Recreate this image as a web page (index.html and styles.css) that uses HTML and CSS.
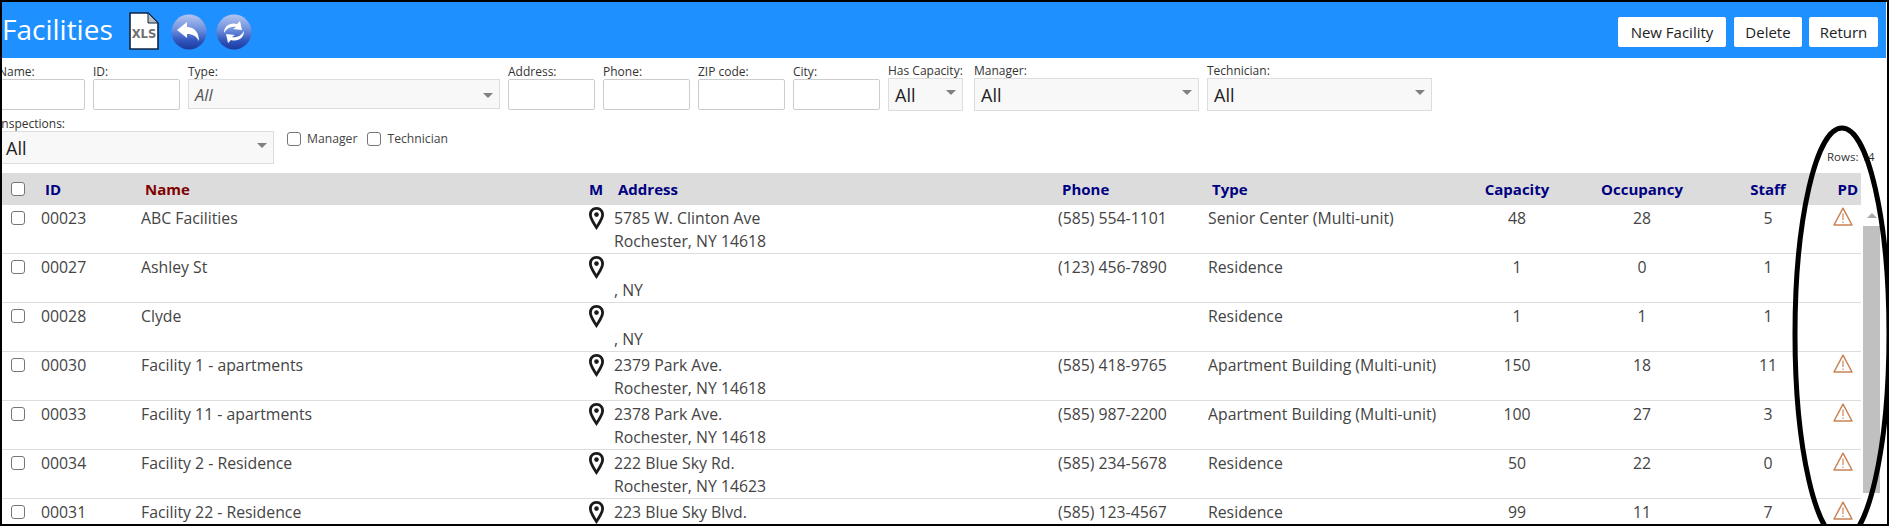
FILE: index.html
```html
<!DOCTYPE html>
<html lang="en">
<head>
<meta charset="utf-8">
<title>Facilities</title>
<link rel="stylesheet" href="styles.css">
</head>
<body>
<div class="frame">
  <svg class="defs" width="0" height="0">
    <defs>
      <linearGradient id="gl" x1="0" y1="0" x2="0" y2="1">
        <stop offset="0" stop-color="#b4c6f0"/><stop offset=".45" stop-color="#6a8cdc"/><stop offset=".75" stop-color="#2f55bd"/><stop offset="1" stop-color="#1c3a9c"/>
      </linearGradient>
      <path id="pin" fill="#1a1a1a" fill-rule="evenodd" d="M7.500 0C3.200 0 0 3.300 0 7.600 0 12 4.500 18.500 7.500 23 10.500 18.500 15 12 15 7.600 15 3.300 11.800 0 7.500 0ZM7.500 2.800C10.200 2.800 12.200 4.800 12.200 7.600 12.200 10.500 9.500 14.800 7.500 18 5.500 14.800 2.800 10.500 2.800 7.600 2.800 4.800 4.800 2.800 7.500 2.800Z"/>
      <g id="warn">
        <path d="M10 1.200 19 18H1Z" fill="none" stroke="#c98355" stroke-width="1.500" stroke-linejoin="round"/>
        <path d="M10 6.500V13M10 14.500V16" stroke="#d9a484" stroke-width="1.600"/>
      </g>
    </defs>
  </svg>
  <header class="topbar">
    <h1 class="title">Facilities</h1>
    <svg class="xls" width="30" height="38" viewBox="0 0 30 38">
      <path d="M1 1H19L29 11V37H1Z" fill="#fff" stroke="#10243f" stroke-width="1.600"/>
      <path d="M19 1V11H29Z" fill="#b9bec4" stroke="#10243f" stroke-width="1"/>
      <text class="xls-text" x="15" y="26" text-anchor="middle">XLS</text>
    </svg>
    <svg class="round first" width="36" height="36" viewBox="0 0 36 36">
      <circle cx="18" cy="18" r="17.500" fill="url(#gl)"/>
      <path d="M6 16 16 8V13C23 13 28 18 28 27 25 22 22 20 16 20V24Z" fill="#fff"/>
    </svg>
    <svg class="round" width="36" height="36" viewBox="0 0 36 36">
      <circle cx="18" cy="18" r="17.500" fill="url(#gl)"/>
      <path d="M8 19C8 12 14 8 21 10L24 7 26 16 17 15 20 13C15 12 11 14 8 19Z" fill="#fff"/>
      <path d="M28 17C28 24 22 28 15 26L12 29 10 20 19 21 16 23C21 24 25 22 28 17Z" fill="#fff"/>
    </svg>
    <div class="actions">
      <button class="btn b-new" type="button">New Facility</button>
      <button class="btn b-del" type="button">Delete</button>
      <button class="btn b-ret" type="button">Return</button>
    </div>
  </header>

  <section class="filters">
    <div class="filter-row">
      <label class="field w-text"><span class="lbl">Name:</span><input class="inp" type="text"></label>
      <label class="field w-text"><span class="lbl">ID:</span><input class="inp" type="text"></label>
      <div class="field w-type"><span class="lbl">Type:</span><div class="sel sel-thin"><span class="italic">All</span></div></div>
      <label class="field w-text"><span class="lbl">Address:</span><input class="inp" type="text"></label>
      <label class="field w-text"><span class="lbl">Phone:</span><input class="inp" type="text"></label>
      <label class="field w-text"><span class="lbl">ZIP code:</span><input class="inp" type="text"></label>
      <label class="field w-text"><span class="lbl">City:</span><input class="inp" type="text"></label>
      <div class="field up w-cap"><span class="lbl">Has Capacity:</span><div class="sel"><span>All</span></div></div>
      <div class="field up w-person far"><span class="lbl">Manager:</span><div class="sel"><span>All</span></div></div>
      <div class="field up w-person"><span class="lbl">Technician:</span><div class="sel"><span>All</span></div></div>
    </div>
    <div class="filter-row second">
      <div class="field w-insp"><span class="lbl lbl-15">Inspections:</span><div class="sel"><span>All</span></div></div>
      <div class="checks">
        <label class="chk"><input type="checkbox" class="box">Manager</label>
        <label class="chk"><input type="checkbox" class="box">Technician</label>
      </div>
      <div class="rows-count">Rows: 14</div>
    </div>
  </section>

  <div class="grid-area">
    <table class="grid">
      <colgroup>
        <col class="c-chk"><col class="c-id"><col class="c-name"><col class="c-m"><col class="c-addr"><col class="c-phone"><col class="c-type"><col class="c-cap"><col class="c-occ"><col class="c-staff"><col class="c-pd">
      </colgroup>
      <thead>
        <tr>
          <th class="ck"><input type="checkbox" class="box"></th>
          <th class="hl">ID</th>
          <th class="hl sorted">Name</th>
          <th class="hm">M</th>
          <th class="hl">Address</th>
          <th class="hl">Phone</th>
          <th class="hl">Type</th>
          <th class="num">Capacity</th>
          <th class="num">Occupancy</th>
          <th class="num">Staff</th>
          <th class="hpd">PD</th>
        </tr>
      </thead>
      <tbody>
        <tr><td class="ck"><input type="checkbox" class="box"></td><td>00023</td><td>ABC Facilities</td><td class="pin"><svg class="pin-i" width="15" height="23" viewBox="0 0 15 23"><use href="#pin"/><circle cx="7.500" cy="7.600" r="2.300" fill="#1a1a1a"/></svg></td><td>5785 W. Clinton Ave<br>Rochester, NY 14618</td><td>(585) 554-1101</td><td>Senior Center (Multi-unit)</td><td class="num">48</td><td class="num">28</td><td class="num">5</td><td class="pd"><svg class="warn" width="20" height="19" viewBox="0 0 20 19"><use href="#warn"/></svg></td></tr>
        <tr><td class="ck"><input type="checkbox" class="box"></td><td>00027</td><td>Ashley St</td><td class="pin"><svg class="pin-i" width="15" height="23" viewBox="0 0 15 23"><use href="#pin"/><circle cx="7.500" cy="7.600" r="2.300" fill="#1a1a1a"/></svg></td><td><br>, NY</td><td>(123) 456-7890</td><td>Residence</td><td class="num">1</td><td class="num">0</td><td class="num">1</td><td class="pd"></td></tr>
        <tr><td class="ck"><input type="checkbox" class="box"></td><td>00028</td><td>Clyde</td><td class="pin"><svg class="pin-i" width="15" height="23" viewBox="0 0 15 23"><use href="#pin"/><circle cx="7.500" cy="7.600" r="2.300" fill="#1a1a1a"/></svg></td><td><br>, NY</td><td></td><td>Residence</td><td class="num">1</td><td class="num">1</td><td class="num">1</td><td class="pd"></td></tr>
        <tr><td class="ck"><input type="checkbox" class="box"></td><td>00030</td><td>Facility 1 - apartments</td><td class="pin"><svg class="pin-i" width="15" height="23" viewBox="0 0 15 23"><use href="#pin"/><circle cx="7.500" cy="7.600" r="2.300" fill="#1a1a1a"/></svg></td><td>2379 Park Ave.<br>Rochester, NY 14618</td><td>(585) 418-9765</td><td>Apartment Building (Multi-unit)</td><td class="num">150</td><td class="num">18</td><td class="num">11</td><td class="pd"><svg class="warn" width="20" height="19" viewBox="0 0 20 19"><use href="#warn"/></svg></td></tr>
        <tr><td class="ck"><input type="checkbox" class="box"></td><td>00033</td><td>Facility 11 - apartments</td><td class="pin"><svg class="pin-i" width="15" height="23" viewBox="0 0 15 23"><use href="#pin"/><circle cx="7.500" cy="7.600" r="2.300" fill="#1a1a1a"/></svg></td><td>2378 Park Ave.<br>Rochester, NY 14618</td><td>(585) 987-2200</td><td>Apartment Building (Multi-unit)</td><td class="num">100</td><td class="num">27</td><td class="num">3</td><td class="pd"><svg class="warn" width="20" height="19" viewBox="0 0 20 19"><use href="#warn"/></svg></td></tr>
        <tr><td class="ck"><input type="checkbox" class="box"></td><td>00034</td><td>Facility 2 - Residence</td><td class="pin"><svg class="pin-i" width="15" height="23" viewBox="0 0 15 23"><use href="#pin"/><circle cx="7.500" cy="7.600" r="2.300" fill="#1a1a1a"/></svg></td><td>222 Blue Sky Rd.<br>Rochester, NY 14623</td><td>(585) 234-5678</td><td>Residence</td><td class="num">50</td><td class="num">22</td><td class="num">0</td><td class="pd"><svg class="warn" width="20" height="19" viewBox="0 0 20 19"><use href="#warn"/></svg></td></tr>
        <tr><td class="ck"><input type="checkbox" class="box"></td><td>00031</td><td>Facility 22 - Residence</td><td class="pin"><svg class="pin-i" width="15" height="23" viewBox="0 0 15 23"><use href="#pin"/><circle cx="7.500" cy="7.600" r="2.300" fill="#1a1a1a"/></svg></td><td>223 Blue Sky Blvd.<br>Rochester, NY 14618</td><td>(585) 123-4567</td><td>Residence</td><td class="num">99</td><td class="num">11</td><td class="num">7</td><td class="pd"><svg class="warn" width="20" height="19" viewBox="0 0 20 19"><use href="#warn"/></svg></td></tr>
      </tbody>
    </table>
    <div class="scrollbar">
      <div class="sb-up"></div>
      <div class="sb-thumb"></div>
    </div>
  </div>

  <svg class="circle" width="1891" height="526" viewBox="0 0 1891 526"><ellipse cx="1842" cy="334" rx="47" ry="206" fill="none" stroke="#000" stroke-width="5"/></svg>
</div>
</body>
</html>
```
FILE: styles.css
```css
* { box-sizing: border-box; }
html, body { margin: 0; padding: 0; background: #fff; }
body { font-family: "Open Sans", "Noto Sans", sans-serif; color: #333; overflow: hidden; }

.frame {
  position: relative;
  width: 1889px;
  height: 526px;
  border: 2px solid #000;
  overflow: hidden;
  background: #fff;
}
.defs { position: absolute; }

.topbar {
  display: flex;
  align-items: center;
  height: 56px;
  width: 1884px;
  background: #1e90ff;
  padding-right: 8px;
}
.title {
  margin: 0 0 2px 0;
  font-size: 28px;
  font-weight: 400;
  color: #fff;
  line-height: 36px;
  width: 127px;
}
.xls { margin-top: 2px; }
.xls-text { font: 700 11.500px "DejaVu Sans", sans-serif; fill: #707070; }
.round { margin-left: 9px; margin-top: 4px; }
.round.first { margin-left: 12px; }
.actions { margin-left: auto; display: flex; gap: 8px; margin-top: 3px; }
.btn {
  height: 30px;
  padding: 0;
  border: 0;
  border-radius: 2px;
  background: #fff;
  color: #222;
  font: 400 15px/30px "Open Sans", sans-serif;
}
.b-new { width: 108px; }
.b-del { width: 68px; }
.b-ret { width: 69px; margin-left: -1px; }

.filters { padding-top: 7px; }
.filter-row { display: flex; align-items: flex-start; gap: 8px; margin-left: -4px; }
.filter-row.second { margin-top: 5px; margin-bottom: 9px; gap: 0; }
.field { display: flex; flex-direction: column; flex: none; }
.field.up { margin-top: -1px; }
.field.far { margin-left: 3px; }
.lbl { font-size: 12px; line-height: 14px; color: #333; white-space: nowrap; }
.lbl-15 { line-height: 15px; }
.w-text { width: 87px; }
.w-type { width: 312px; }
.w-cap { width: 75px; }
.w-person { width: 225px; }
.w-insp { width: 276px; }
.inp {
  height: 31px;
  width: 100%;
  border: 1px solid #ccc;
  border-radius: 2px;
  background: #fff;
}
.sel {
  position: relative;
  height: 33px;
  padding: 1px 0 0 6px;
  border: 1px solid #ddd;
  background: #f8f8f8;
  font-size: 18px;
  line-height: 30px;
  color: #222;
}
.w-insp .sel { padding-left: 7px; }
.sel-thin { height: 30px; padding: 0 0 0 6px; line-height: 29px; }
.sel::after {
  content: "";
  position: absolute;
  right: 6px;
  top: 11px;
  border: 5px solid transparent;
  border-top: 5px solid #808080;
  border-bottom: 0;
}
.sel-thin::after { top: 13px; }
.italic { font-style: italic; font-size: 16.500px; color: #555; }

.checks { display: flex; gap: 10px; margin-left: 13px; padding-top: 15px; }
.chk { display: flex; align-items: center; gap: 6px; font-size: 12.200px; line-height: 15px; color: #444; }
.box {
  appearance: none;
  width: 14px;
  height: 14px;
  margin: 0;
  border: 1px solid #767676;
  border-radius: 3px;
  background: #fff;
  display: block;
}
.rows-count {
  margin-left: auto;
  align-self: flex-end;
  width: 60px;
  font-size: 11.500px;
  line-height: 14px;
  color: #333;
  white-space: nowrap;
}

.grid-area { display: flex; align-items: flex-start; }
.grid {
  table-layout: fixed;
  width: 1859px;
  flex: none;
  border-collapse: separate;
  border-spacing: 0;
  font-size: 15.800px;
  color: #444;
}
.c-chk { width: 39px; } .c-id { width: 100px; } .c-name { width: 445px; } .c-m { width: 28px; }
.c-addr { width: 444px; } .c-phone { width: 150px; } .c-type { width: 266px; } .c-cap { width: 86px; }
.c-occ { width: 164px; } .c-staff { width: 88px; } .c-pd { width: 49px; }

.grid thead tr { height: 32px; background: #dcdcdc; }
.grid th {
  padding: 0;
  font-size: 15px;
  font-weight: 700;
  color: #000080;
  text-align: left;
  vertical-align: middle;
}
.grid th.hl { padding-left: 4px; }
.grid th.sorted { color: #800000; }
.grid th.hm { padding-left: 3px; }
.grid th.hpd { text-align: right; padding-right: 3px; }
.grid th.num { text-align: center; }
.grid th.ck { padding-left: 9px; }

.grid td {
  padding: 2px 0 0;
  line-height: 23px;
  vertical-align: top;
  white-space: nowrap;
  height: 49px;
  border-bottom: 1px solid #ddd;
}
.grid td.ck { padding: 6px 0 0 9px; }
.grid td.num { text-align: center; }
.grid td.pin { padding: 2px 0 0 3px; }
.grid td.pd { text-align: right; padding: 2px 8px 0 0; }
.pin-i, .warn { display: block; }
.warn { margin-left: auto; }

.scrollbar { flex: none; width: 19px; height: 320px; margin-left: 2px; padding-top: 32px; display: flex; flex-direction: column; }
.sb-up { height: 21px; position: relative; }
.sb-up::after {
  content: "";
  position: absolute;
  left: 4px;
  top: 8px;
  border: 5px solid transparent;
  border-bottom: 5px solid #a8a8a8;
  border-top: 0;
}
.sb-thumb { width: 17px; flex: 1; background: #c0c0c0; }

.circle { position: absolute; left: -2px; top: -2px; pointer-events: none; }
```
